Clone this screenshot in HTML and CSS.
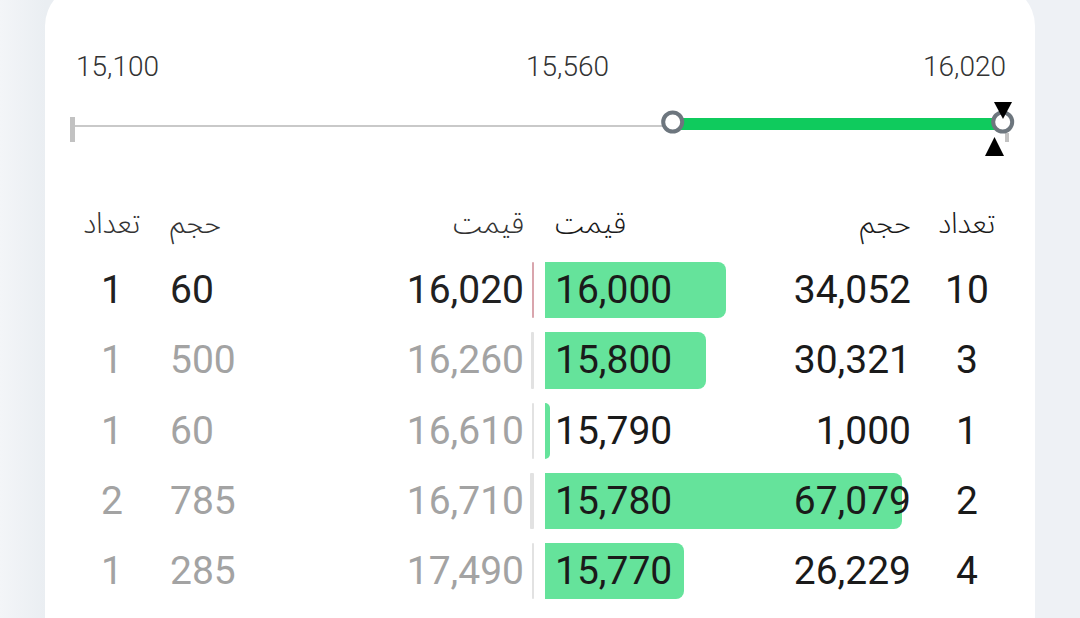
FILE: index.html
```html
<!DOCTYPE html>
<html lang="fa">
<head>
<meta charset="utf-8">
<title>Order book</title>
<link rel="stylesheet" href="styles.css">
</head>
<body>
<div class="card">
  <div class="scale">
    <span class="scale-min">15,100</span>
    <span class="scale-mid">15,560</span>
    <span class="scale-max">16,020</span>
  </div>
  <svg class="slider" width="990" height="62" viewBox="0 0 990 62">
    <rect x="25" y="19" width="5" height="25" fill="#c2c2c2"/>
    <rect x="30" y="27" width="600" height="2" fill="#c9c9c9"/>
    <rect x="960" y="35" width="4" height="9" fill="#c2c2c2"/>
    <rect x="634" y="20" width="322" height="12" fill="#0fcb5d"/>
    <circle cx="627.7" cy="24" r="9.5" fill="#fff" stroke="#6d767e" stroke-width="4"/>
    <circle cx="957.7" cy="24" r="9.5" fill="#fff" stroke="#6d767e" stroke-width="4"/>
    <polygon points="949,4 967,4 958,21" fill="#000"/>
    <polygon points="940,58 959,58 949.5,39" fill="#000"/>
  </svg>
  <div class="book">
    <div class="row head">
      <div class="half sell">
        <span class="c">تعداد</span><span class="v">حجم</span><span class="p">قیمت</span>
      </div>
      <div class="half buy">
        <span class="p">قیمت</span><span class="v">حجم</span><span class="c">تعداد</span>
      </div>
    </div>

    <div class="row">
      <div class="half sell active">
        <i class="bar" style="width:2px"></i>
        <span class="c">1</span><span class="v">60</span><span class="p">16,020</span>
      </div>
      <div class="half buy">
        <i class="bar" style="width:181px"></i>
        <span class="p">16,000</span><span class="v">34,052</span><span class="c">10</span>
      </div>
    </div>

    <div class="row">
      <div class="half sell">
        <i class="bar" style="width:3px"></i>
        <span class="c">1</span><span class="v">500</span><span class="p">16,260</span>
      </div>
      <div class="half buy">
        <i class="bar" style="width:161px"></i>
        <span class="p">15,800</span><span class="v">30,321</span><span class="c">3</span>
      </div>
    </div>

    <div class="row">
      <div class="half sell">
        <i class="bar" style="width:2px"></i>
        <span class="c">1</span><span class="v">60</span><span class="p">16,610</span>
      </div>
      <div class="half buy">
        <i class="bar" style="width:5px"></i>
        <span class="p">15,790</span><span class="v">1,000</span><span class="c">1</span>
      </div>
    </div>

    <div class="row">
      <div class="half sell">
        <i class="bar" style="width:4px"></i>
        <span class="c">2</span><span class="v">785</span><span class="p">16,710</span>
      </div>
      <div class="half buy">
        <i class="bar" style="width:357px"></i>
        <span class="p">15,780</span><span class="v">67,079</span><span class="c">2</span>
      </div>
    </div>

    <div class="row">
      <div class="half sell">
        <i class="bar" style="width:2px"></i>
        <span class="c">1</span><span class="v">285</span><span class="p">17,490</span>
      </div>
      <div class="half buy">
        <i class="bar" style="width:139px"></i>
        <span class="p">15,770</span><span class="v">26,229</span><span class="c">4</span>
      </div>
    </div>
  </div>
</div>
</body>
</html>
```

FILE: styles.css
```css
html, body {
  margin: 0;
  padding: 0;
}
body {
  width: 1080px;
  height: 618px;
  overflow: hidden;
  background: linear-gradient(90deg, #f3f5f8 0px, #eaeef2 45px, #eef1f5 1035px, #eef1f5 100%);
  font-family: Roboto, "Noto Sans Arabic", "DejaVu Sans", sans-serif;
  color: #212121;
}
.card {
  margin: -16px 0 0 45px;
  width: 990px;
  height: 634px;
  overflow: hidden;
  background: #fff;
  border-radius: 42px 42px 0 0;
  padding-top: 66px;
  box-sizing: border-box;
}
.scale {
  display: grid;
  grid-template-columns: 450px 1fr auto;
  padding: 0 29px 0 31px;
  height: 34px;
  line-height: 34px;
  font-size: 28px;
  font-weight: 300;
  color: #333;
}
.slider {
  display: block;
  margin-top: 14px;
}
.book {
  margin-top: 33px;
}
.row {
  display: flex;
  height: 70.25px;
}
.row.head {
  height: 42px;
  margin-bottom: 20px;
  font-weight: 300;
  color: #333;
}
.half {
  flex: 1;
  position: relative;
  display: grid;
  align-items: center;
  font-size: 39px;
}
.row.head .half {
  font-size: 29px;
}
.half > span {
  position: relative;
  white-space: nowrap;
}
.sell {
  grid-template-columns: 80px 150px 1fr;
  column-gap: 18px;
  padding: 0 15px 0 27px;
  color: #a3a3a3;
}
.sell.active {
  color: #212121;
}
.row.head .sell {
  color: #333;
}
.buy {
  grid-template-columns: 1fr 150px 80px;
  column-gap: 16px;
  padding: 0 28px 0 16px;
}
.sell .c { text-align: center; }
.sell .v { text-align: left; }
.sell .p { text-align: right; }
.buy .p { text-align: left; }
.buy .v { text-align: right; }
.buy .c { text-align: center; }
.bar {
  position: absolute;
  top: 7px;
  bottom: 7px;
}
.sell .bar {
  right: 5px;
  background: #e2e2e2;
  border-radius: 1px;
}
.sell.active .bar {
  background: #d9a5ad;
}
.buy .bar {
  left: 6px;
  background: #65e39b;
  border-radius: 0 8px 8px 0;
}
.buy > span {
  color: #1a1a1a;
}
```
